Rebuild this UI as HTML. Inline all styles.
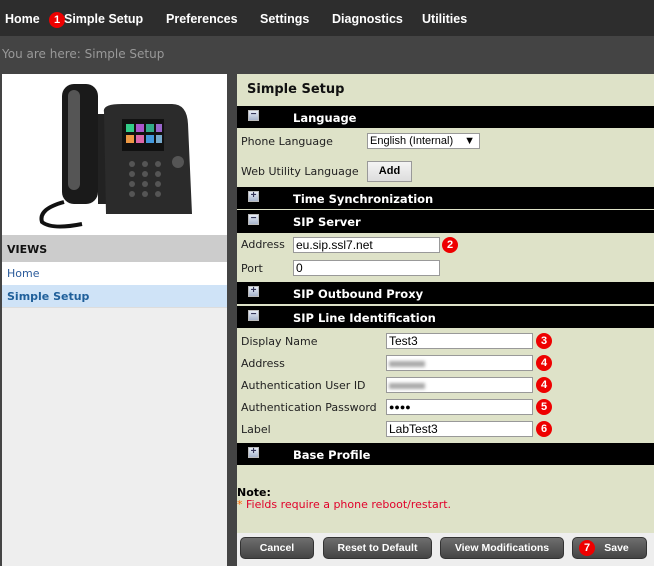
<!DOCTYPE html>
<html><head><style>
*{margin:0;padding:0;box-sizing:border-box}
body{width:654px;height:566px;overflow:hidden;background:#444;font-family:"DejaVu Sans","Liberation Sans",sans-serif;position:relative}
.a{position:absolute}
.nav{left:0;top:0;width:654px;height:36px;background:#2d2d2d}
.nav span{position:absolute;top:12px;color:#fff;font-size:12.5px;font-weight:bold;font-family:"Liberation Sans",sans-serif}
.bc{left:0;top:36px;width:654px;height:37px;background:#444;color:#999;font-size:12px;padding:11px 0 0 2px}
.badge{position:absolute;width:16px;height:16px;border-radius:50%;background:#e00;color:#fff;font:bold 11px/16px "Liberation Sans",sans-serif;text-align:center}
.right{left:237px;top:74px;width:417px;height:459px;background:#dee2c8}
.hdr{position:absolute;left:237px;width:417px;height:22px;background:#000;color:#fff;font-size:11.5px;font-weight:bold;padding:5px 0 0 56px}
.hdr i{position:absolute;left:11px;top:4px;width:11px;height:11px;background:linear-gradient(#e8eef8,#a7b4cc);border:1px solid #bbb;color:#335;font:bold 10px/8px sans-serif;text-align:center;font-style:normal}
.lbl{position:absolute;left:241px;font-size:11px;color:#222}
.inp{position:absolute;height:16px;background:#fff;border:1px solid #999;font:12px/14px "Liberation Sans",sans-serif;padding-left:2px;color:#000}
.btn{position:absolute;top:537px;height:22px;border-radius:5px;background:linear-gradient(#6e6e6e,#444);border:1px solid #333;color:#fff;font:bold 10.5px/20px "Liberation Sans",sans-serif;text-align:center}
.blur{display:inline-block;width:36px;height:6px;margin-top:4px;background:#aaa;filter:blur(1.5px)}
</style></head><body>
<div class="a nav">
<span style="left:5px">Home</span>
<div class="badge" style="left:49px;top:12px">1</div>
<span style="left:64px">Simple Setup</span>
<span style="left:166px">Preferences</span>
<span style="left:260px">Settings</span>
<span style="left:332px">Diagnostics</span>
<span style="left:422px">Utilities</span>
</div>
<div class="a bc">You are here: Simple Setup</div>

<div class="a" style="left:2px;top:74px;width:225px;height:492px;background:#eee"></div>
<div class="a" style="left:2px;top:74px;width:225px;height:161px;background:#fff">
<svg width="225" height="161" viewBox="0 0 225 161">
<rect x="60" y="10" width="36" height="120" rx="12" fill="#1a1a1a"/>
<rect x="66" y="16" width="12" height="100" rx="6" fill="#555"/>
<path d="M96 40 L110 40 L110 130 L96 130Z" fill="#222"/>
<path d="M102 38 Q100 30 120 30 L170 30 Q185 30 186 50 L190 140 L104 140Z" fill="#2b2b2b"/>
<rect x="120" y="45" width="42" height="32" fill="#111"/>
<rect x="124" y="50" width="8" height="8" fill="#3c8"/><rect x="134" y="50" width="8" height="8" fill="#a5c"/><rect x="144" y="50" width="8" height="8" fill="#3a8"/><rect x="154" y="50" width="6" height="8" fill="#96c"/>
<rect x="124" y="61" width="8" height="8" fill="#e94"/><rect x="134" y="61" width="8" height="8" fill="#d6a"/><rect x="144" y="61" width="8" height="8" fill="#49d"/><rect x="154" y="61" width="6" height="8" fill="#7ac"/>
<g fill="#555"><circle cx="130" cy="90" r="3"/><circle cx="143" cy="90" r="3"/><circle cx="156" cy="90" r="3"/><circle cx="130" cy="100" r="3"/><circle cx="143" cy="100" r="3"/><circle cx="156" cy="100" r="3"/><circle cx="130" cy="110" r="3"/><circle cx="143" cy="110" r="3"/><circle cx="156" cy="110" r="3"/><circle cx="130" cy="120" r="3"/><circle cx="143" cy="120" r="3"/><circle cx="156" cy="120" r="3"/><circle cx="176" cy="88" r="6"/></g>
<path d="M62 128 Q36 135 40 148 Q50 156 80 150" stroke="#111" stroke-width="4" fill="none"/>
</svg></div>
<div class="a" style="left:2px;top:235px;width:225px;height:27px;background:#ccc;font-size:11px;font-weight:bold;padding:8px 5px;color:#111">VIEWS</div>
<div class="a" style="left:2px;top:262px;width:225px;height:23px;background:#fff;font-size:11px;padding:5px 5px;color:#2a5a9a">Home</div>
<div class="a" style="left:2px;top:285px;width:225px;height:23px;background:#cfe3f7;font-size:11px;font-weight:bold;padding:5px 5px;color:#1f5f9a;border-bottom:1px solid #ddd">Simple Setup</div>

<div class="a right"></div>
<div class="a" style="left:237px;top:533px;width:417px;height:33px;background:#eee"></div>
<div class="a" style="left:247px;top:82px;font-size:13px;font-weight:bold;color:#111">Simple Setup</div>

<div class="hdr" style="top:106px"><i>−</i>Language</div>
<div class="lbl" style="top:135px">Phone Language</div>
<div class="inp" style="left:367px;top:133px;width:113px;font-size:11px">English (Internal) <span style="float:right;margin-right:4px">▼</span></div>
<div class="lbl" style="top:165px">Web Utility Language</div>
<div class="a" style="left:367px;top:161px;width:45px;height:21px;background:linear-gradient(#f4f4f4,#ddd);border:1px solid #999;font:bold 11px/19px sans-serif;text-align:center">Add</div>
<div class="hdr" style="top:187px"><i>+</i>Time Synchronization</div>
<div class="hdr" style="top:210px;height:23px"><i>−</i>SIP Server</div>
<div class="lbl" style="top:238px">Address</div>
<div class="inp" style="left:293px;top:237px;width:147px">eu.sip.ssl7.net</div>
<div class="badge" style="left:442px;top:237px">2</div>
<div class="lbl" style="top:262px">Port</div>
<div class="inp" style="left:293px;top:260px;width:147px">0</div>
<div class="hdr" style="top:282px"><i>+</i>SIP Outbound Proxy</div>
<div class="hdr" style="top:306px"><i>−</i>SIP Line Identification</div>
<div class="lbl" style="top:335px">Display Name</div>
<div class="inp" style="left:386px;top:333px;width:147px">Test3</div>
<div class="badge" style="left:536px;top:333px">3</div>
<div class="lbl" style="top:357px">Address</div>
<div class="inp" style="left:386px;top:355px;width:147px"><span class="blur"></span></div>
<div class="badge" style="left:536px;top:355px">4</div>
<div class="lbl" style="top:379px">Authentication User ID</div>
<div class="inp" style="left:386px;top:377px;width:147px"><span class="blur"></span></div>
<div class="badge" style="left:536px;top:377px">4</div>
<div class="lbl" style="top:401px">Authentication Password</div>
<div class="inp" style="left:386px;top:399px;width:147px;font-size:9px">●●●●</div>
<div class="badge" style="left:536px;top:399px">5</div>
<div class="lbl" style="top:423px">Label</div>
<div class="inp" style="left:386px;top:421px;width:147px">LabTest3</div>
<div class="badge" style="left:536px;top:421px">6</div>
<div class="hdr" style="top:443px"><i>+</i>Base Profile</div>
<div class="a" style="left:237px;top:486px;font-size:11px;font-weight:bold;color:#000">Note:</div>
<div class="a" style="left:237px;top:498px;font-size:11px;color:#e0002a"><span style="color:#f60">*</span> Fields require a phone reboot/restart.</div>

<div class="btn" style="left:240px;width:74px">Cancel</div>
<div class="btn" style="left:323px;width:109px">Reset to Default</div>
<div class="btn" style="left:440px;width:124px">View Modifications</div>
<div class="btn" style="left:572px;width:75px;padding-left:14px">Save</div>
<div class="badge" style="left:579px;top:540px">7</div>
</body></html>
